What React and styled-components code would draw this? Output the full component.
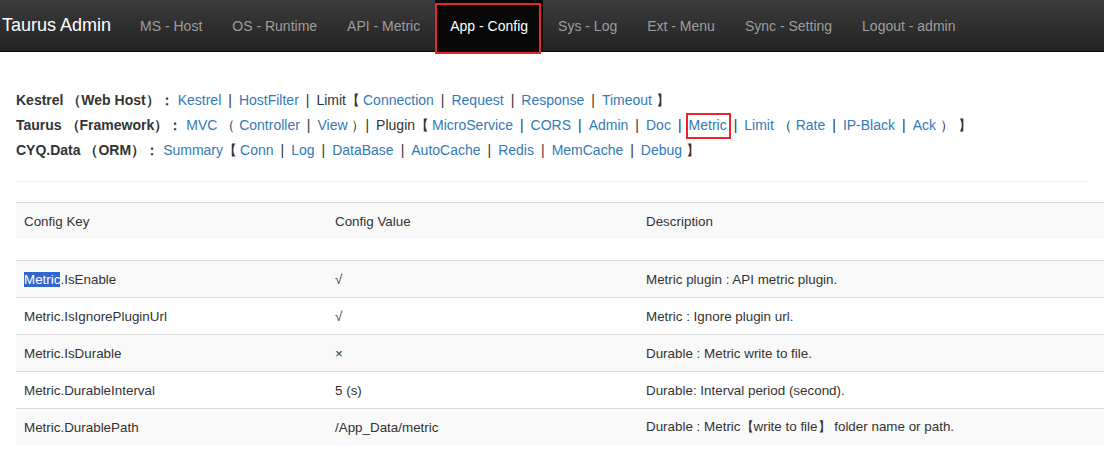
import React from "react";
import styled, { createGlobalStyle } from "styled-components";

const G = createGlobalStyle`
  body { margin: 0; font-family: Arial, "Liberation Sans", sans-serif; font-size: 14px; color: #333; background: #fff; overflow: hidden; }
`;
const Nav = styled.div`
  height: 52px; display: flex; align-items: stretch;
  background: linear-gradient(#3c3c3c, #222); border-bottom: 1px solid #080808; box-sizing: border-box;
`;
const Brand = styled.div`
  color: #fff; font-size: 18px; padding: 0 14px 0 2px; display: flex; align-items: center;
`;
const Item = styled.div`
  color: ${p => (p.$active ? "#fff" : "#9d9d9d")}; display: flex; align-items: center;
  padding: 0 15px; font-size: 14px;
  background: ${p => (p.$active ? "#080808" : "transparent")}; position: relative;
  ${p => p.$active && `&::after{content:"";position:absolute;left:0px;right:2px;top:3px;bottom:-3px;border:2px solid #e8242c;}`}
`;
const Links = styled.div`
  padding: 36px 16px 0; line-height: 25px; font-size: 14px;
`;
const Line = styled.div` white-space: nowrap; `;
const B = styled.b` color: #333; font-weight: bold; margin-right: 4px; `;
const A = styled.a` color: #337ab7; text-decoration: none; position: relative;
  ${p => p.$box && `&::after{content:"";position:absolute;left:-3px;right:-4px;top:-4px;bottom:-6px;border:2px solid #e8242c;}`}
`;
const Sep = styled.span` margin: 0 7px; `;
const Br = styled.span` margin-right: 3px; `;
const Hr = styled.div` border-top: 1px solid #eee; margin: 18px 0 20px; `;
const Table = styled.div` margin-left: 16px; font-size: 13.4px; `;
const Row = styled.div`
  display: grid; grid-template-columns: 311px 311px 1fr; height: ${p => p.$h || 37}px; align-items: center;
  border-top: ${p => (p.$nb ? "none" : "1px solid #ddd")}; background: ${p => (p.$g ? "#f9f9f9" : "#fff")}; box-sizing: border-box;
`;
const Cell = styled.div` padding-left: 8px; color: #333; `;
const Sel = styled.span` background: #3366cc; color: #fff; `;

const S = () => <Sep>|</Sep>;

const rows = [
  ["Metric.IsEnable", "√", "Metric plugin : API metric plugin."],
  ["Metric.IsIgnorePluginUrl", "√", "Metric : Ignore plugin url."],
  ["Metric.IsDurable", "×", "Durable : Metric write to file."],
  ["Metric.DurableInterval", "5 (s)", "Durable: Interval period (second)."],
  ["Metric.DurablePath", "/App_Data/metric", "Durable : Metric【write to file】 folder name or path."],
];

export default function App() {
  return (
    <>
      <G />
      <Nav>
        <Brand>Taurus Admin</Brand>
        <Item>MS - Host</Item>
        <Item>OS - Runtime</Item>
        <Item>API - Metric</Item>
        <Item $active>App - Config</Item>
        <Item>Sys - Log</Item>
        <Item>Ext - Menu</Item>
        <Item>Sync - Setting</Item>
        <Item>Logout - admin</Item>
      </Nav>
      <Links>
        <Line><B>Kestrel （Web Host）：</B><A>Kestrel</A><S /><A>HostFilter</A><S />Limit<Br>【</Br><A>Connection</A><S /><A>Request</A><S /><A>Response</A><S /><A>Timeout</A> 】</Line>
        <Line><B>Taurus （Framework）：</B><A>MVC</A> （ <A>Controller</A><S /><A>View</A> ）<Sep style={{ marginLeft: 0 }}>|</Sep>Plugin<Br>【</Br><A>MicroService</A><S /><A>CORS</A><S /><A>Admin</A><S /><A>Doc</A><S /><A $box>Metric</A><S /><A>Limit</A> （ <A>Rate</A><S /><A>IP-Black</A><S /><A>Ack</A> ） 】</Line>
        <Line><B>CYQ.Data （ORM）：</B><A>Summary</A><Br>【</Br><A>Conn</A><S /><A>Log</A><S /><A>DataBase</A><S /><A>AutoCache</A><S /><A>Redis</A><S /><A>MemCache</A><S /><A>Debug</A> 】</Line>
        <Hr />
      </Links>
      <Table>
        <Row $g><Cell>Config Key</Cell><Cell>Config Value</Cell><Cell>Description</Cell></Row>
        <Row $h={21} $nb />
        {rows.map((r, i) => (
          <Row key={i} $g={i % 2 === 0}>
            <Cell>{i === 0 ? <><Sel>Metric</Sel>.IsEnable</> : r[0]}</Cell>
            <Cell>{r[1]}</Cell>
            <Cell>{r[2]}</Cell>
          </Row>
        ))}
      </Table>
    </>
  );
}
